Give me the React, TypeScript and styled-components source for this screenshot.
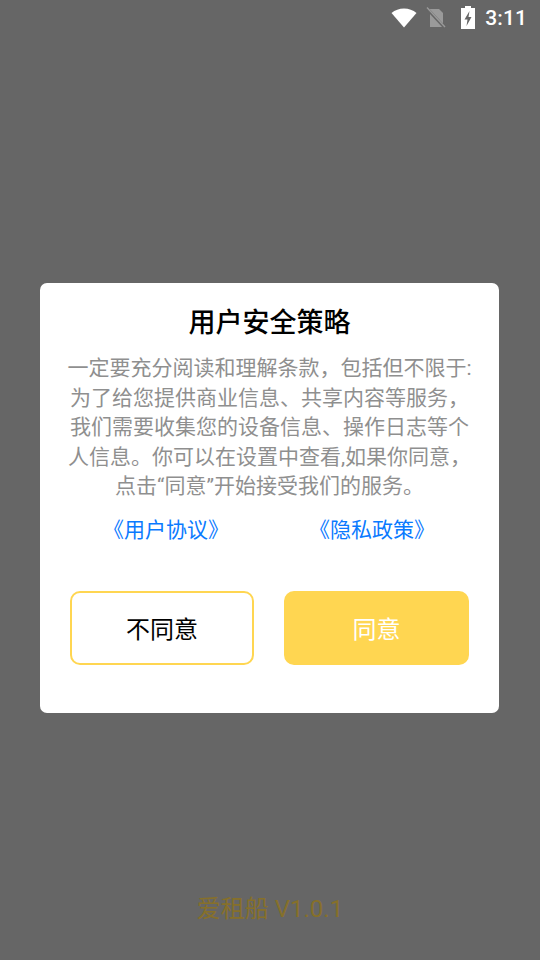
import React from "react";
import styled, { createGlobalStyle } from "styled-components";

const Global = createGlobalStyle`
  html, body { margin: 0; padding: 0; background: #666666; }
  * { box-sizing: border-box; }
`;

const FONT = `Roboto, "Noto Sans CJK SC", sans-serif`;

const Page = styled.div`
  width: 540px;
  height: 960px;
  background: #666666;
  display: flex;
  flex-direction: column;
  font-family: ${FONT};
  overflow: hidden;
`;

const StatusBar = styled.div`
  height: 36px;
  display: flex;
  align-items: center;
  justify-content: flex-end;
  padding-right: 13px;
  color: #fff;
`;

const StatusIcon = styled.svg<{ $ml: number }>`
  display: block;
  margin-left: ${(p) => p.$ml}px;
`;

const Clock = styled.span`
  font-size: 21px;
  font-weight: 500;
  line-height: 36px;
  margin-left: 9px;
  letter-spacing: 0.1px;
`;

const Dialog = styled.section`
  width: 459px;
  height: 430px;
  margin: 247px 0 0 40px;
  background: #fff;
  border-radius: 7px;
  padding: 21px 30px 0;
  display: flex;
  flex-direction: column;
  align-items: stretch;
`;

const Title = styled.h1`
  margin: 0;
  height: 38px;
  font-size: 27px;
  line-height: 38px;
  font-weight: 500;
  color: #000;
  text-align: center;
`;

const Body = styled.p`
  margin: 12px -6px 0;
  font-size: 21px;
  line-height: 29.5px;
  color: #8f8f8f;
  text-align: center;
  white-space: nowrap;
`;

const Links = styled.div`
  margin-top: 13px;
  display: flex;
  justify-content: space-between;
  padding: 0 34px 0 33px;
`;

const DocLink = styled.a`
  font-size: 21px;
  line-height: 30px;
  color: #0a7aff;
  text-decoration: none;
`;

const Actions = styled.div`
  margin-top: 46px;
  display: flex;
  justify-content: space-between;
`;

const Choice = styled.button<{ $primary?: boolean }>`
  width: ${(p) => (p.$primary ? 185 : 184)}px;
  height: 74px;
  border-radius: 10px;
  border: 2px solid #ffd651;
  background: ${(p) => (p.$primary ? "#ffd651" : "#fff")};
  color: ${(p) => (p.$primary ? "#fff" : "#000")};
  font-family: ${FONT};
  font-size: 24px;
  padding: 0;
`;

const Version = styled.div`
  margin-top: 178px;
  text-align: center;
  font-size: 24px;
  line-height: 36px;
  color: #86702a;
`;

export default function App() {
  return (
    <Page>
      <Global />
      <StatusBar>
        <StatusIcon $ml={0} width="26" height="20" viewBox="0 0 26 20">
          <path d="M13 19.500 0.500 5C4 2 8.200 0.500 13 0.500S22 2 25.500 5Z" fill="#fff" />
        </StatusIcon>
        <StatusIcon $ml={9} width="20" height="22" viewBox="0 0 20 22">
          <path d="M4 2h9l4 4v14H4Z" fill="#9a9a9a" />
          <path d="M1 1.500 19 21" stroke="#666" strokeWidth="3" />
          <path d="M1 0.500 19 20" stroke="#9a9a9a" strokeWidth="1.400" />
        </StatusIcon>
        <StatusIcon $ml={14} width="16" height="24" viewBox="0 0 16 24">
          <path d="M5 0h6v2h4v21H1V2h4Z" fill="#fff" />
          <path d="M9.500 5 4.500 13.500h3L6.500 20l5-9h-3Z" fill="#666" />
        </StatusIcon>
        <Clock>3:11</Clock>
      </StatusBar>
      <Dialog>
        <Title>用户安全策略</Title>
        <Body>
          一定要充分阅读和理解条款，包括但不限于:
          <br />
          为了给您提供商业信息、共享内容等服务，
          <br />
          我们需要收集您的设备信息、操作日志等个
          <br />
          人信息。你可以在设置中查看,如果你同意，
          <br />
          点击“同意”开始接受我们的服务。
        </Body>
        <Links>
          <DocLink>《用户协议》</DocLink>
          <DocLink>《隐私政策》</DocLink>
        </Links>
        <Actions>
          <Choice>不同意</Choice>
          <Choice $primary>同意</Choice>
        </Actions>
      </Dialog>
      <Version>爱租船 V1.0.1</Version>
    </Page>
  );
}
